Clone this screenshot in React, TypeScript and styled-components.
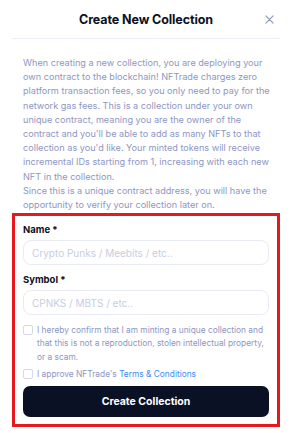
import React, { useState } from 'react'
import styled, { createGlobalStyle } from 'styled-components'

const GlobalStyle = createGlobalStyle`
  html, body { margin: 0; padding: 0; background: #fff; }
  body { font-family: Inter, "Noto Sans", sans-serif; }
  * { box-sizing: border-box; }
`

const Modal = styled.div`
  width: 292px;
  height: 433px;
  padding: 0 12px;
  display: flex;
  flex-direction: column;
  background: #fff;
`

const Header = styled.div`
  height: 39px;
  display: flex;
  align-items: center;
  justify-content: center;
  position: relative;
  border-bottom: 1px solid #eceef5;
`

const Title = styled.h2`
  margin: 0;
  font-size: 12.5px;
  font-weight: 700;
  color: #0b1125;
  letter-spacing: -0.1px;
`

const CloseButton = styled.button`
  position: absolute;
  right: 4px;
  top: 12px;
  width: 14px;
  height: 14px;
  padding: 0;
  border: 0;
  background: none;
  display: flex;
  align-items: center;
  justify-content: center;
  cursor: pointer;
`

const Intro = styled.p`
  margin: 17px 0 0;
  padding: 0 6px 0 11px;
  font-size: 9.15px;
  line-height: 14.2px;
  color: #8d96c2;
`

const FormBox = styled.form`
  margin-top: 1px;
  border: 3px solid #e8191e;
  padding: 8px 8px 7px;
  display: flex;
  flex-direction: column;
`

const Label = styled.label`
  font-size: 9.5px;
  font-weight: 700;
  color: #0b1125;
  margin-bottom: 5px;
`

const Input = styled.input<{ spaced?: boolean }>`
  height: 25px;
  border: 1px solid #e8ebf4;
  border-radius: 8px;
  padding: 0 8px;
  font-family: inherit;
  font-size: 10px;
  color: #0b1125;
  outline: 0;
  margin-bottom: ${(p) => (p.spaced ? '9px' : '9px')};
  &::placeholder { color: #c7cde2; }
`

const CheckRow = styled.label<{ last?: boolean }>`
  display: flex;
  gap: 4px;
  align-items: flex-start;
  margin-bottom: ${(p) => (p.last ? '5px' : '4px')};
  font-size: 8.35px;
  line-height: 13.2px;
  color: #8d96c2;
  white-space: nowrap;
  cursor: pointer;
`

const Box = styled.span<{ checked: boolean }>`
  flex: none;
  width: 10px;
  height: 10px;
  margin-top: 1px;
  border: 1px solid #d4d9e9;
  border-radius: 2px;
  background: ${(p) => (p.checked ? '#0b1125' : '#fff')};
`

const Link = styled.a`
  color: #3d8bf5;
  text-decoration: none;
`

const SubmitButton = styled.button`
  height: 31px;
  border: 0;
  border-radius: 7px;
  background: #0b1125;
  color: #fff;
  font-family: inherit;
  font-size: 10.5px;
  font-weight: 700;
  cursor: pointer;
`

export default function App() {
  const [name, setName] = useState<string>('')
  const [symbol, setSymbol] = useState<string>('')
  const [confirm, setConfirm] = useState<boolean>(false)
  const [terms, setTerms] = useState<boolean>(false)

  return (
    <>
      <GlobalStyle />
      <Modal>
        <Header>
          <Title>Create New Collection</Title>
          <CloseButton aria-label='close'>
            <svg width='9' height='9' viewBox='0 0 10 10'>
              <path d='M1 1L9 9M9 1L1 9' stroke='#8d96c2' strokeWidth='1.3' strokeLinecap='round' />
            </svg>
          </CloseButton>
        </Header>
        <Intro>
          When creating a new collection, you are deploying your own contract to the blockchain! NFTrade
          charges zero platform transaction fees, so you only need to pay for the network gas fees. This is a
          collection under your own unique contract, meaning you are the owner of the contract and you'll be
          able to add as many NFTs to that collection as you'd like. Your minted tokens will receive
          incremental IDs starting from 1, increasing with each new NFT in the collection.
          <br />
          Since this is a unique contract address, you will have the opportunity to verify your collection
          later on.
        </Intro>
        <FormBox onSubmit={(e) => e.preventDefault()}>
          <Label htmlFor='name'>Name *</Label>
          <Input id='name' value={name} placeholder='Crypto Punks / Meebits / etc..' onChange={(e) => setName(e.target.value)} />
          <Label htmlFor='symbol'>Symbol *</Label>
          <Input id='symbol' spaced value={symbol} placeholder='CPNKS / MBTS / etc..' onChange={(e) => setSymbol(e.target.value)} />
          <CheckRow onClick={() => setConfirm(!confirm)}>
            <Box checked={confirm} />
            <span>
              I hereby confirm that I am minting a unique collection and
              <br />
              that this is not a reproduction, stolen intellectual property,
              <br />
              or a scam.
            </span>
          </CheckRow>
          <CheckRow last onClick={() => setTerms(!terms)}>
            <Box checked={terms} />
            <span>
              I approve NFTrade's <Link href='#'>Terms &amp; Conditions</Link>
            </span>
          </CheckRow>
          <SubmitButton type='submit'>Create Collection</SubmitButton>
        </FormBox>
      </Modal>
    </>
  )
}
